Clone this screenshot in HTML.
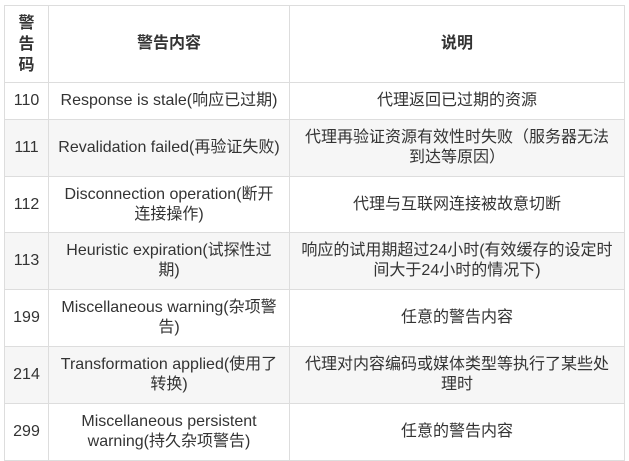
<!DOCTYPE html>
<html><head><meta charset="utf-8"><style>
body{margin:0;background:#fff;}
table{position:absolute;left:4px;top:5px;border-collapse:collapse;table-layout:fixed;width:620px;font-family:"Liberation Sans","Noto Sans CJK SC",sans-serif;font-size:16px;color:#333;}
td,th{border:1px solid #ddd;text-align:center;vertical-align:middle;padding:0 8px;line-height:20px;overflow:hidden;}
th{font-weight:bold;}
tr.s td{background:#f6f6f6;}
</style></head><body>
<table>
<colgroup><col style="width:44px"><col style="width:241px"><col style="width:335px"></colgroup>
<tr style="height:77px"><th style="padding:0 12px;line-height:21px">警<br>告<br>码</th><th>警告内容</th><th>说明</th></tr>
<tr style="height:37px"><td style="padding:0">110</td><td>Response is stale(响应已过期)</td><td>代理返回已过期的资源</td></tr>
<tr class="s" style="height:57px"><td style="padding:0">111</td><td style="padding:0 4px">Revalidation failed(再验证失败)</td><td style="padding:0 10px">代理再验证资源有效性时失败（服务器无法到达等原因）</td></tr>
<tr style="height:56px"><td style="padding:0">112</td><td style="padding:0 10px">Disconnection operation(断开连接操作)</td><td>代理与互联网连接被故意切断</td></tr>
<tr class="s" style="height:57px"><td style="padding:0">113</td><td style="padding:0 10px">Heuristic expiration(试探性过期)</td><td>响应的试用期超过24小时(有效缓存的设定时间大于24小时的情况下)</td></tr>
<tr style="height:57px"><td style="padding:0">199</td><td style="padding:0 10px">Miscellaneous warning(杂项警告)</td><td>任意的警告内容</td></tr>
<tr class="s" style="height:57px"><td style="padding:0">214</td><td style="padding:0 10px">Transformation applied(使用了转换)</td><td style="padding:0 10px">代理对内容编码或媒体类型等执行了某些处理时</td></tr>
<tr style="height:57px"><td style="padding:0">299</td><td style="padding:0 10px">Miscellaneous persistent warning(持久杂项警告)</td><td>任意的警告内容</td></tr>
</table>
</body></html>
